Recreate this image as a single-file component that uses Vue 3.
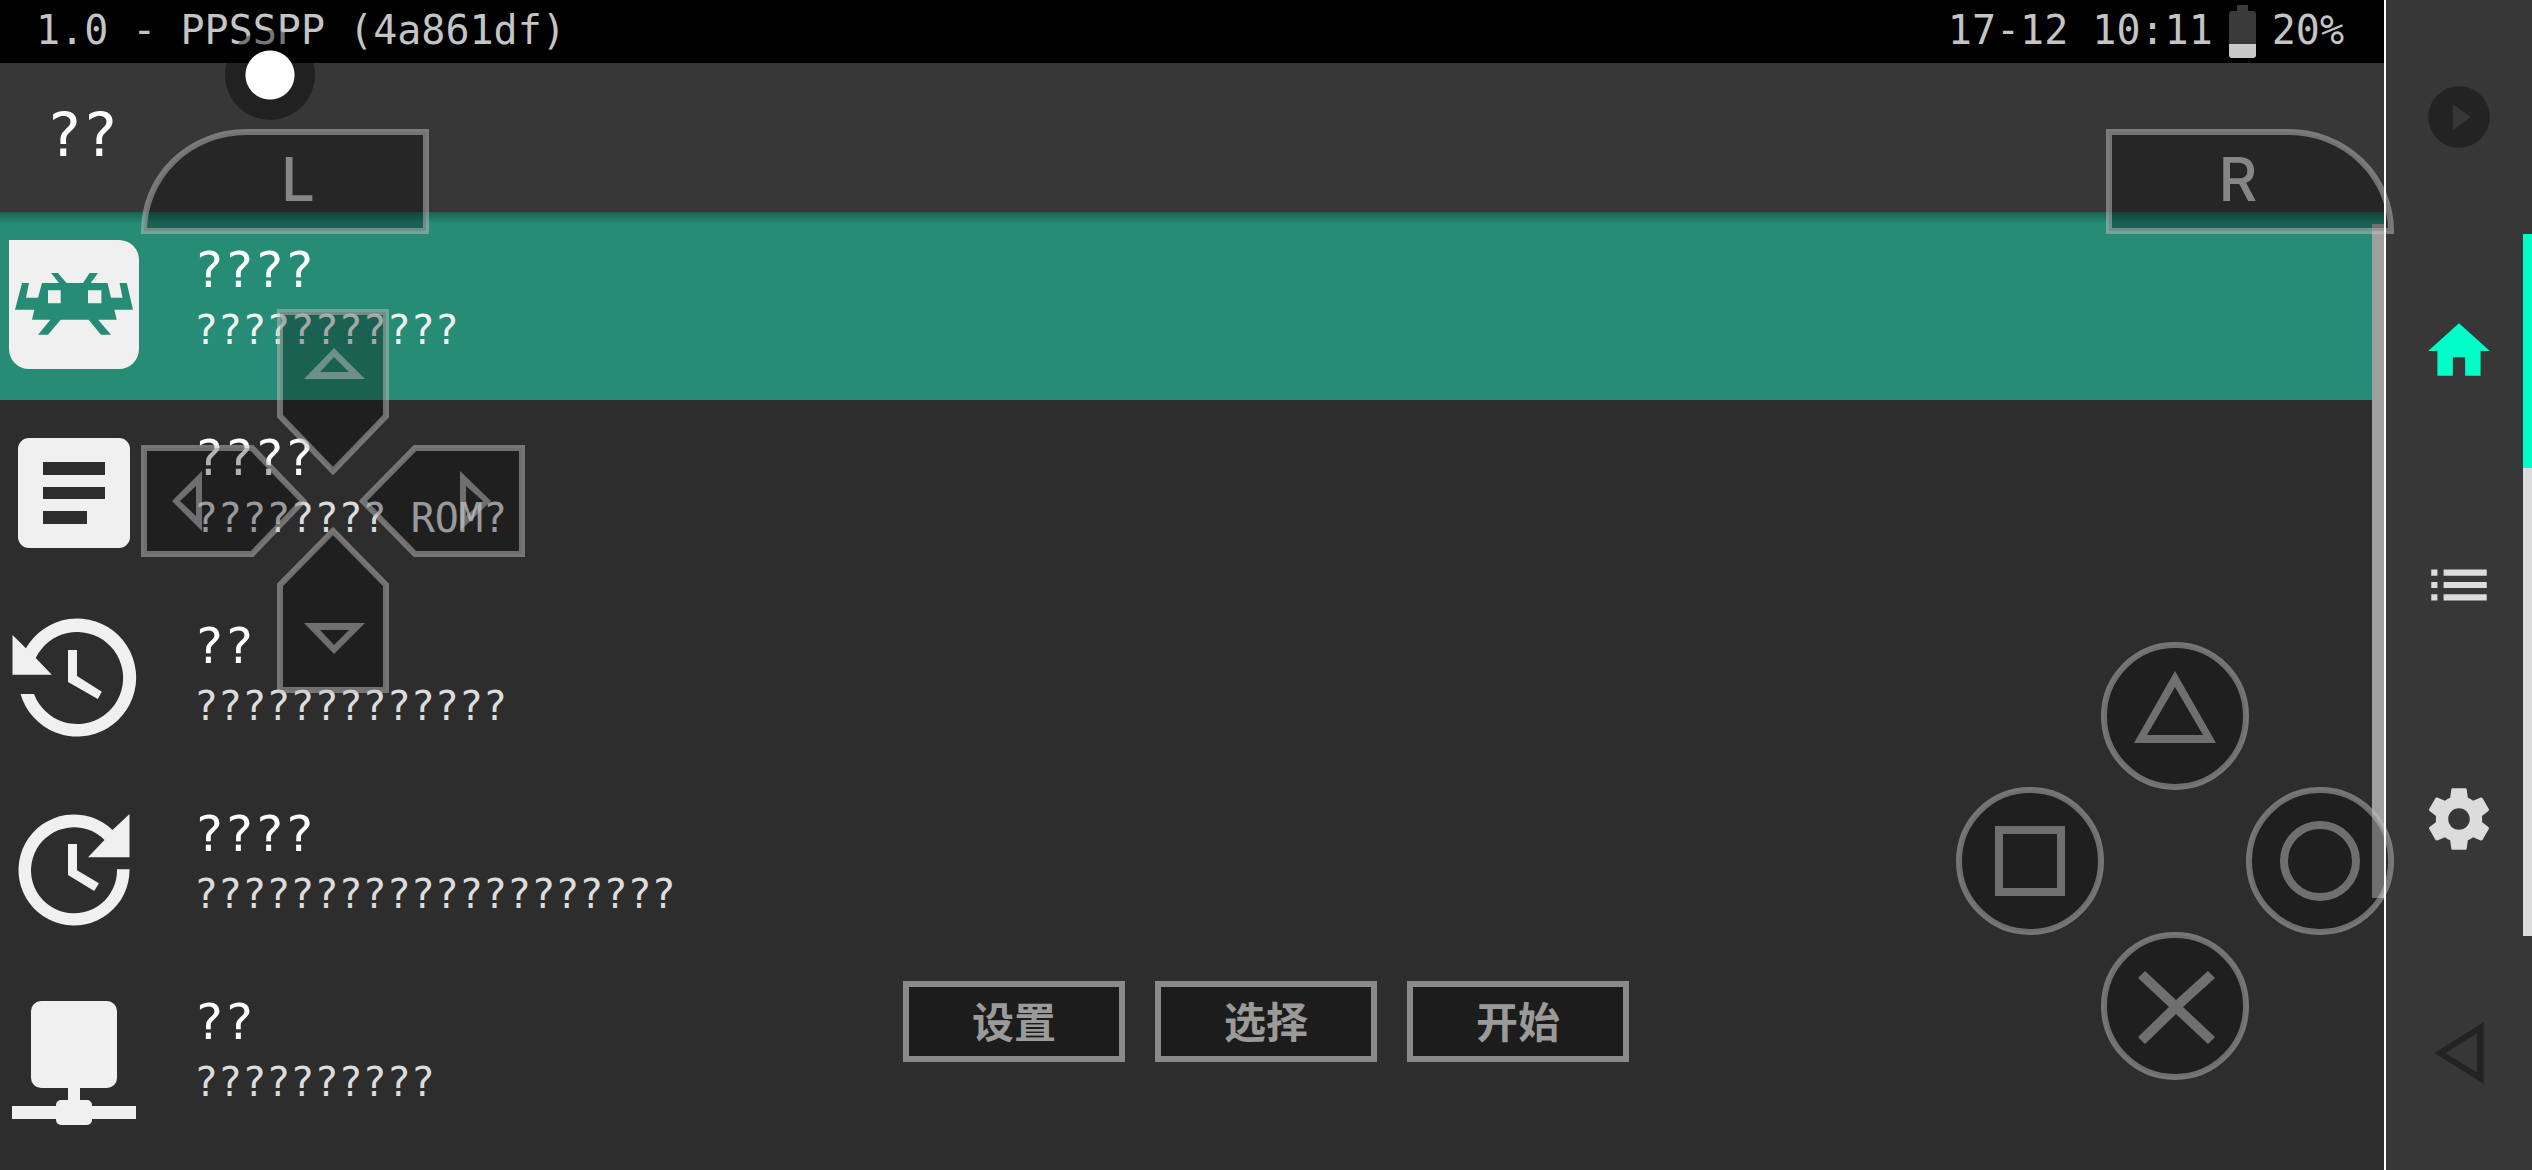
<script setup>
import { ref } from 'vue';

const selected = ref(0);
const activeTab = ref('home');

const entries = [
  { icon: 'core', title: '????', detail: '???????????' },
  { icon: 'file', title: '????', detail: '???????? ROM?' },
  { icon: 'history', title: '??', detail: '?????????????' },
  { icon: 'update', title: '????', detail: '????????????????????' },
  { icon: 'network', title: '??', detail: '??????????' },
];

const tabs = [
  { id: 'play', label: 'Resume', dim: true },
  { id: 'home', label: 'Home', dim: false },
  { id: 'list', label: 'Playlists', dim: false },
  { id: 'settings', label: 'Settings', dim: false },
  { id: 'back', label: 'Back', dim: true },
];

// outline and arrow of each direction, drawn in the button's own box
const directions = [
  { id: 'up', w: 112, h: 166, shape: 'M3 3H109V107L56 162L3 107Z', arrow: 'M57 39L88 70H27ZM57 48L43 63H72Z' },
  { id: 'left', w: 166, h: 112, shape: 'M3 3H111L162 56L111 109H3Z', arrow: 'M31 56L61 26V86ZM39 56L55 41V71Z' },
  { id: 'right', w: 166, h: 112, shape: 'M163 3H56L4 56L56 109H163Z', arrow: 'M132 56L101 26V86ZM124 56L107 41V71Z' },
  { id: 'down', w: 112, h: 166, shape: 'M3 163H109V58L56 4L3 58Z', arrow: 'M57 127L88 96H27ZM57 118L43 103H72Z' },
];

const faces = ['triangle', 'square', 'circle', 'cross'];
const centerKeys = ['设置', '选择', '开始'];
</script>

<template>
  <div class="screen">
    <main class="content">
      <div class="status">
        <span>1.0 - PPSSPP (4a861df)</span>
        <div class="status-right">
          <span>17-12 10:11</span>
          <svg class="battery" viewBox="0 0 27 57">
            <path d="M8 4H19V10H24Q27 10 27 13V43H0V13Q0 10 3 10H8Z" fill="#3a3a3a" />
            <path d="M0 43H27V54Q27 57 24 57H3Q0 57 0 54Z" fill="#c8c8c8" />
          </svg>
          <span>20%</span>
        </div>
      </div>

      <h1 class="title">??</h1>

      <div class="list-area">
        <ul class="list">
          <li v-for="(entry, i) in entries" :key="i">
            <button class="entry" :class="{ selected: selected === i }" @click="selected = i">
              <svg class="entry-icon" viewBox="0 0 148 148" fill="#f0f0f0">
                <path
                  v-if="entry.icon === 'core'"
                  fill-rule="evenodd"
                  d="M9 8H119A20 20 0 0 1 139 28V117A20 20 0 0 1 119 137H29A20 20 0 0 1 9 117Z
                     M42 51L38 65.7H26L29 51H22L15 77.7H34.3L32 87.7H50.4L38 102.7H48L60.7 87.7H88.6L101 102.7H111L98.2 87.7H116.8L114.3 77.7H133L126.8 51H119.6L122.5 65.7H111L107.5 51H90.7L98 41H89.6L83 51H66.5L58 41H51L59 51Z
                     M48 58.3H60.7V71.3H48Z M88 58.3H101.4V71.3H88Z"
                />
                <path
                  v-else-if="entry.icon === 'file'"
                  fill-rule="evenodd"
                  d="M29 18H119A11 11 0 0 1 130 29V117A11 11 0 0 1 119 128H29A11 11 0 0 1 18 117V29A11 11 0 0 1 29 18Z
                     M43 42H105V55H43Z M43 67H105V79H43Z M43 91H87V104H43Z"
                />
                <template v-else-if="entry.icon === 'history'">
                  <path d="M25.9 40.3A59 59 0 1 1 20.5 86H34A46 46 0 1 0 35.7 50L51.8 66.7H12.5V27Z" />
                  <path d="M68 42H77V68L101.8 83.7L97.8 91L68 74Z" />
                </template>
                <template v-else-if="entry.icon === 'update'">
                  <path d="M112.5 34A55.5 55.5 0 1 0 129.5 73.3H117A43 43 0 1 1 104.5 44L88 61.3H129.5V18Z" />
                  <path d="M68 48H77V74.3L99 87.3L94.2 95L68 79Z" />
                </template>
                <template v-else>
                  <rect x="31" y="17" width="86" height="87" rx="10" />
                  <rect x="68" y="100" width="12" height="20" />
                  <rect x="56" y="116" width="36" height="25" rx="5" />
                  <rect x="12" y="122" width="124" height="13" />
                </template>
              </svg>
              <span class="entry-text">
                <span class="entry-title">{{ entry.title }}</span>
                <span class="entry-detail">{{ entry.detail }}</span>
              </span>
            </button>
          </li>
        </ul>
        <div class="scroll-thumb"></div>
      </div>
    </main>

    <div class="divider"></div>

    <nav class="sidebar">
      <button
        v-for="tab in tabs"
        :key="tab.id"
        class="tab"
        :class="{ dim: tab.dim, bar: !tab.dim, active: activeTab === tab.id }"
        :aria-label="tab.label"
        @click="activeTab = tab.id"
      >
        <svg class="tab-icon" viewBox="0 0 24 24" fill="currentColor">
          <path v-if="tab.id === 'play'" fill-rule="evenodd" d="M12 2a10 10 0 1 0 0 20a10 10 0 1 0 0-20z M10 7.8L15.8 12L10 16.2z" />
          <path v-else-if="tab.id === 'home'" d="M10 20v-6h4v6h5v-8h3L12 3 2 12h3v8z" />
          <path v-else-if="tab.id === 'list'" d="M3 13h2v-2H3v2zm0 4h2v-2H3v2zm0-8h2V7H3v2zm4 4h14v-2H7v2zm0 4h14v-2H7v2zM7 7v2h14V7H7z" />
          <path
            v-else-if="tab.id === 'settings'"
            d="M19.43 12.98c.04-.32.07-.64.07-.98s-.03-.66-.07-.98l2.11-1.65c.19-.15.24-.42.12-.64l-2-3.46c-.12-.22-.39-.3-.61-.22l-2.49 1c-.52-.4-1.08-.73-1.69-.98l-.38-2.65C14.46 2.18 14.25 2 14 2h-4c-.25 0-.46.18-.49.42l-.38 2.65c-.61.25-1.17.59-1.69.98l-2.49-1c-.23-.09-.49 0-.61.22l-2 3.46c-.13.22-.07.49.12.64l2.11 1.65c-.04.32-.07.65-.07.98s.03.66.07.98l-2.11 1.65c-.19.15-.24.42-.12.64l2 3.46c.12.22.39.3.61.22l2.49-1c.52.4 1.08.73 1.69.98l.38 2.65c.03.24.24.42.49.42h4c.25 0 .46-.18.49-.42l.38-2.65c.61-.25 1.17-.59 1.69-.98l2.49 1c.23.09.49 0 .61-.22l2-3.46c.12-.22.07-.49-.12-.64l-2.11-1.65zM12 15.5c-1.93 0-3.5-1.57-3.5-3.5s1.57-3.5 3.5-3.5 3.5 1.57 3.5 3.5-1.57 3.5-3.5 3.5z"
          />
          <path v-else fill-rule="evenodd" d="M4 12L20 2V22z M7.6 12L17.8 18.3V5.7z" />
        </svg>
      </button>
    </nav>

    <!-- touch controls over the menu -->
    <div class="overlay">
      <div class="touch"></div>

      <button class="key shoulder-left" aria-label="L">
        <svg width="288" height="105" viewBox="0 0 288 105">
          <path class="outline" d="M3 102A102 99 0 0 1 105 3H285V102Z" />
          <text x="157" y="72" text-anchor="middle">L</text>
        </svg>
      </button>
      <button class="key shoulder-right" aria-label="R">
        <svg width="288" height="105" viewBox="0 0 288 105">
          <path class="outline" d="M285 102A102 99 0 0 0 183 3H3V102Z" />
          <text x="132" y="72" text-anchor="middle">R</text>
        </svg>
      </button>

      <div class="dpad">
        <button v-for="d in directions" :key="d.id" class="key" :class="d.id" :aria-label="d.id">
          <svg :width="d.w" :height="d.h" :viewBox="`0 0 ${d.w} ${d.h}`">
            <path class="outline" :d="d.shape" />
            <path class="glyph-fill" fill-rule="evenodd" :d="d.arrow" />
          </svg>
        </button>
      </div>

      <div class="faces">
        <button v-for="face in faces" :key="face" class="key" :class="face" :aria-label="face">
          <svg width="148" height="148" viewBox="0 0 148 148">
            <circle class="outline thin" cx="74" cy="74" r="71" />
            <path v-if="face === 'triangle'" class="glyph-fill" fill-rule="evenodd" d="M74 29L115 101H33ZM74 45L46 93H102Z" />
            <rect v-else-if="face === 'square'" class="glyph" x="43" y="43" width="62" height="62" />
            <circle v-else-if="face === 'circle'" class="glyph" cx="74" cy="74" r="36" />
            <path v-else class="glyph-fill" d="M44 39L75 68L107 39L114 46L82 75L114 105L107 112L75 82L44 112L37 105L68 75L37 46Z" />
          </svg>
        </button>
      </div>

      <div class="center-keys">
        <button v-for="key in centerKeys" :key="key" class="center-key">{{ key }}</button>
      </div>
    </div>
  </div>
</template>

<style>
body {
  margin: 0;
  background: #2d2d2d;
}
</style>

<style scoped>
.screen {
  position: relative;
  display: flex;
  min-height: 100vh;
  overflow: hidden;
  background: #2d2d2d;
  font-family: "DejaVu Sans Mono", monospace;
}

button {
  padding: 0;
  border: none;
  background: none;
  font: inherit;
  cursor: pointer;
}

svg {
  display: block;
}

.content {
  flex: 1;
  min-width: 0;
  display: flex;
  flex-direction: column;
}

.status {
  box-sizing: border-box;
  height: 63px;
  padding: 0 40px 4px 36px;
  display: flex;
  align-items: center;
  justify-content: space-between;
  background: #000;
  color: #c4c4c4;
  font-size: 40px;
  line-height: 40px;
}

.status-right {
  display: flex;
  align-items: center;
  gap: 16px;
}

.battery {
  width: 27px;
  height: 57px;
}

.title {
  box-sizing: border-box;
  height: 149px;
  margin: 0;
  padding: 0 46px 6px;
  display: flex;
  align-items: center;
  background: #373737;
  color: #fff;
  font-size: 60px;
  font-weight: normal;
  line-height: 60px;
}

.list-area {
  position: relative;
  flex: 1;
}

/* shadow the header casts on the list */
.list-area::before {
  content: "";
  position: absolute;
  top: 0;
  left: 0;
  right: 0;
  height: 12px;
  background: linear-gradient(rgba(0, 0, 0, 0.3), rgba(0, 0, 0, 0));
}

.list {
  margin: 0;
  padding: 0;
  list-style: none;
}

.entry {
  width: 100%;
  height: 188px;
  display: flex;
  align-items: center;
  gap: 46px;
  text-align: left;
  color: #dcdcdc;
}

.entry.selected {
  background: #268c75;
  color: #f0f0f0;
}

.entry-icon {
  width: 148px;
  height: 148px;
}

.entry-text {
  display: flex;
  flex-direction: column;
  gap: 15px;
  padding-bottom: 18px;
}

.entry-title {
  color: #fff;
  font-size: 50px;
  line-height: 50px;
}

.entry-detail {
  font-size: 40px;
  line-height: 40px;
}

.scroll-thumb {
  position: absolute;
  top: 12px;
  right: 0;
  width: 12px;
  height: 674px;
  background: #9f9f9f;
}

.divider {
  position: relative;
  z-index: 3;
  width: 2px;
  background: #fff;
}

.sidebar {
  width: 146px;
  display: flex;
  flex-direction: column;
  background: #373737;
}

.tab {
  box-sizing: border-box;
  flex: 1;
  display: flex;
  align-items: center;
  justify-content: center;
  border: solid transparent;
  border-width: 0 9px;
  color: #dcdcdc;
}

.tab.bar {
  border-right-color: #dcdcdc;
}

.tab.active {
  border-right-color: #00ffc8;
  color: #00ffc8;
}

.tab.dim {
  color: #232323;
}

.tab-icon {
  width: 74px;
  height: 74px;
}

.overlay {
  position: absolute;
  inset: 0;
  z-index: 2;
}

.touch {
  position: absolute;
  top: 30px;
  left: 225px;
  width: 90px;
  height: 90px;
  border-radius: 50%;
  background: radial-gradient(circle, #fff 24px, rgba(0, 0, 0, 0.4) 25px);
}

.key {
  position: absolute;
}

.outline {
  fill: rgba(0, 0, 0, 0.3);
  stroke: rgba(192, 192, 192, 0.5);
  stroke-width: 6;
}

.outline.thin {
  stroke-width: 6;
}

.glyph {
  fill: none;
  stroke: rgba(192, 192, 192, 0.5);
  stroke-width: 8;
}

.glyph-fill {
  fill: rgba(192, 192, 192, 0.5);
}

.key text {
  fill: #868686;
  font-family: Inter, "Liberation Sans", sans-serif;
  font-size: 60px;
  font-weight: 500;
}

.shoulder-left {
  top: 129px;
  left: 141px;
}

.shoulder-right {
  top: 129px;
  right: 138px;
}

.dpad {
  position: absolute;
  top: 309px;
  left: 141px;
  width: 384px;
  height: 384px;
}

.up {
  top: 0;
  left: 136px;
}

.left {
  top: 136px;
  left: 0;
}

.right {
  top: 136px;
  right: 0;
}

.down {
  bottom: 0;
  left: 136px;
}

.faces {
  position: absolute;
  top: 642px;
  right: 138px;
  width: 438px;
  height: 438px;
}

.triangle {
  top: 0;
  left: 145px;
}

.square {
  top: 145px;
  left: 0;
}

.circle {
  top: 145px;
  right: 0;
}

.cross {
  bottom: 0;
  left: 145px;
}

.center-keys {
  position: absolute;
  left: 0;
  right: 0;
  bottom: 108px;
  display: flex;
  justify-content: center;
  gap: 30px;
}

.center-key {
  box-sizing: border-box;
  width: 222px;
  height: 81px;
  padding-bottom: 4px;
  border: 6px solid #8a8a8a;
  background: #1c1c1c;
  color: #9a9a9a;
  font-family: "Noto Sans CJK SC", sans-serif;
  font-size: 42px;
  font-weight: 700;
  line-height: 60px;
}
</style>
